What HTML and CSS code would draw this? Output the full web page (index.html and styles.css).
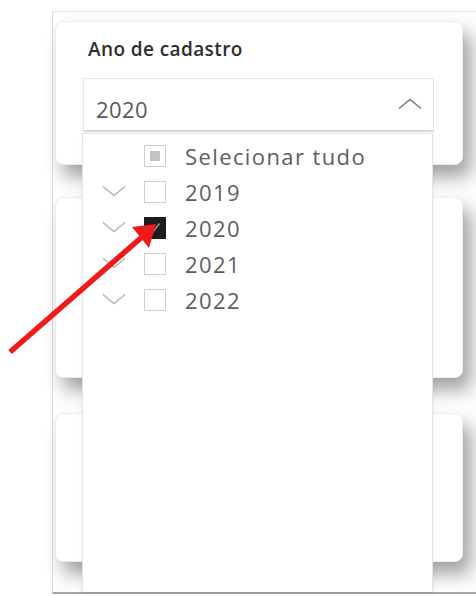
FILE: index.html
```html
<!DOCTYPE html>
<html lang="pt-BR">
<head>
<meta charset="utf-8">
<title>Ano de cadastro</title>
<link rel="stylesheet" href="styles.css">
</head>
<body>
  <div class="canvas">
    <div class="card card-slicer">
      <div class="card-title">Ano de cadastro</div>
      <div class="dropdown-head">
        <span class="dropdown-value">2020</span>
        <svg class="caret-up" width="24" height="12" viewBox="0 0 24 12"><polyline points="1,10.5 12,1.5 23,10.5" fill="none" stroke="#7a7a7a" stroke-width="1.6"/></svg>
      </div>
    </div>
    <div class="card card-mid"></div>
    <div class="card card-low"></div>

    <div class="dropdown-list">
      <div class="item">
        <span class="expander"></span>
        <span class="box box-partial"><span class="box-fill"></span></span>
        <span class="label">Selecionar tudo</span>
      </div>
      <div class="item">
        <svg class="expander" width="24" height="12" viewBox="0 0 24 12"><polyline points="1,1.5 12,10.5 23,1.5" fill="none" stroke="#b4b4b4" stroke-width="1.5"/></svg>
        <span class="box"></span>
        <span class="label">2019</span>
      </div>
      <div class="item">
        <svg class="expander" width="24" height="12" viewBox="0 0 24 12"><polyline points="1,1.5 12,10.5 23,1.5" fill="none" stroke="#b4b4b4" stroke-width="1.5"/></svg>
        <span class="box box-checked"><svg width="22" height="22" viewBox="0 0 22 22"><polyline points="6,12 9,15 16,6" fill="none" stroke="#9a9a9a" stroke-width="1.6"/></svg></span>
        <span class="label">2020</span>
      </div>
      <div class="item">
        <svg class="expander" width="24" height="12" viewBox="0 0 24 12"><polyline points="1,1.5 12,10.5 23,1.5" fill="none" stroke="#b4b4b4" stroke-width="1.5"/></svg>
        <span class="box"></span>
        <span class="label">2021</span>
      </div>
      <div class="item">
        <svg class="expander" width="24" height="12" viewBox="0 0 24 12"><polyline points="1,1.5 12,10.5 23,1.5" fill="none" stroke="#b4b4b4" stroke-width="1.5"/></svg>
        <span class="box"></span>
        <span class="label">2022</span>
      </div>
    </div>
  </div>

  <!-- annotation arrow pointing at the selected year -->
  <svg class="pointer-arrow" width="476" height="596" viewBox="0 0 476 596">
    <line x1="10" y1="352" x2="142" y2="237" stroke="#ee1b1b" stroke-width="5.5" stroke-linecap="butt"/>
    <polygon points="132,227 156,224 149,248" fill="#ee1b1b"/>
  </svg>
</body>
</html>
```

FILE: styles.css
```css
html, body {
  margin: 0;
  padding: 0;
  background: #ffffff;
  overflow: hidden;
  width: 476px;
  height: 596px;
  font-family: "Open Sans", "Noto Sans", sans-serif;
}

.canvas {
  position: relative;
  margin: 11px 0 0 52px;
  width: 440px;
  height: 583px;
  padding: 9px 0 0 2px;
  box-sizing: border-box;
  border-top: 1px solid #e2e2e2;
  border-left: 1px solid #dcdcdc;
  border-bottom: 2px solid #a6a6a6;
  background: #fdfdfd;
  display: flex;
  flex-direction: column;
}

.card {
  width: 408px;
  box-sizing: border-box;
  background: #ffffff;
  border: 1px solid #ececec;
  border-radius: 8px;
  box-shadow: 8px 12px 18px rgba(0, 0, 0, 0.36);
}

.card-slicer {
  height: 144px;
  padding: 14px 28px 0 27px;
}

.card-mid {
  height: 181px;
  margin-top: 32px;
}

.card-low {
  height: 149px;
  margin-top: 35px;
}

.card-title {
  padding-left: 5px;
  font-size: 19px;
  font-weight: 600;
  line-height: 26px;
  color: #2e2e2e;
  letter-spacing: 0.4px;
}

.dropdown-head {
  margin-top: 16px;
  height: 54px;
  box-sizing: border-box;
  border: 1px solid #e6e6e6;
  border-bottom: 2px solid #dadada;
  padding: 0 11px 0 12px;
  display: flex;
  align-items: center;
  justify-content: space-between;
}

.dropdown-value {
  font-size: 22px;
  line-height: 30px;
  padding-top: 8px;
  color: #595959;
  letter-spacing: 0.4px;
}

.caret-up {
  margin-bottom: 2px;
}

.dropdown-list {
  position: absolute;
  left: 29px;
  top: 121px;
  width: 351px;
  height: 459px;
  box-sizing: border-box;
  background: #ffffff;
  border: 1px solid #e4e4e4;
  border-bottom: none;
  padding-top: 4px;
  box-shadow: 0 2px 6px rgba(0, 0, 0, 0.06);
}

.item {
  height: 36px;
  display: flex;
  align-items: center;
}

.expander {
  width: 24px;
  height: 12px;
  margin-left: 19px;
  margin-top: -3px;
  flex: none;
}

.box {
  width: 22px;
  height: 22px;
  box-sizing: border-box;
  border: 1px solid #cdcdcd;
  margin-left: 18px;
  flex: none;
  display: flex;
  align-items: center;
  justify-content: center;
  background: #ffffff;
}

.box-partial .box-fill {
  width: 10px;
  height: 10px;
  background: #c2c2c2;
}

.box-checked {
  background: #1c1c1c;
  border-color: #1c1c1c;
}

.label {
  margin-left: 19px;
  font-size: 22px;
  line-height: 30px;
  color: #5e5e5e;
  letter-spacing: 1.4px;
  white-space: nowrap;
}

.pointer-arrow {
  position: absolute;
  left: 0;
  top: 0;
  pointer-events: none;
}
```
